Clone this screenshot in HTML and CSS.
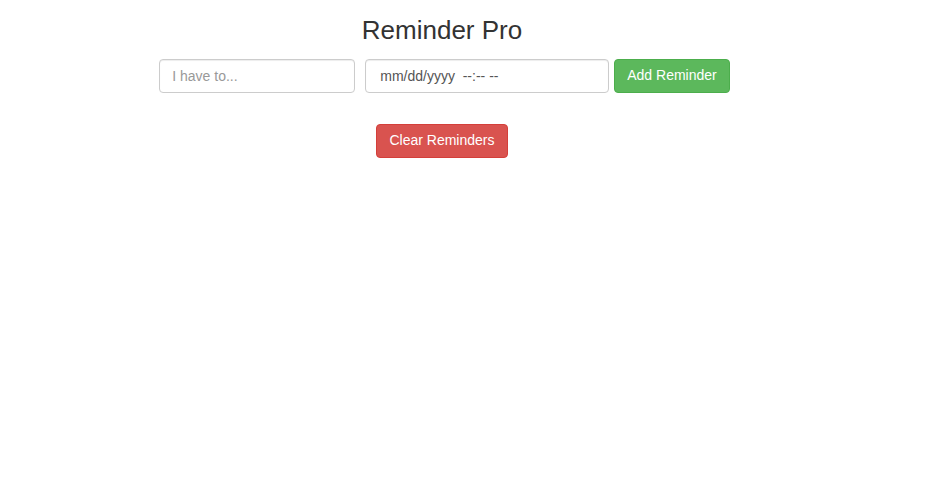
FILE: index.html
```html
<!DOCTYPE html>
<html>
<head>
<meta charset="utf-8">
<title>Reminder Pro</title>
<link rel="stylesheet" href="styles.css">
</head>
<body>
<div class="app">
  <h3 class="title">Reminder Pro</h3>
  <div class="form-row">
    <input class="form-control task" type="text" placeholder="I have to...">
    <input class="form-control date" type="text" placeholder="mm/dd/yyyy  --:-- --">
    <button class="btn btn-success add">Add Reminder</button>
  </div>
  <button class="btn btn-danger clear">Clear Reminders</button>
</div>
</body>
</html>
```
FILE: styles.css
```css
html, body {
  margin: 0;
  padding: 0;
  background: #fff;
}
body {
  font-family: "Liberation Sans", Arial, sans-serif;
  font-size: 14px;
  line-height: 1.42857;
  color: #333;
}
.app {
  width: 884px;
  display: flex;
  flex-direction: column;
  align-items: center;
  padding-top: 16px;
}
.title {
  margin: 0;
  font-size: 26px;
  font-weight: 400;
  line-height: 1.1;
  color: #333;
}
.form-row {
  display: flex;
  align-items: center;
  margin-top: 14px;
  padding-left: 5px;
}
.form-control {
  box-sizing: border-box;
  height: 34px;
  padding: 6px 12px;
  font-family: inherit;
  font-size: 14px;
  line-height: 1.42857;
  color: #555;
  background: #fff;
  border: 1px solid #ccc;
  border-radius: 4px;
  box-shadow: inset 0 1px 1px rgba(0,0,0,.075);
  outline: none;
}
.form-control::placeholder {
  color: #999;
}
.task {
  width: 196px;
}
.date {
  width: 244px;
  margin-left: 10px;
  padding-left: 14px;
  white-space: pre;
}
.date::placeholder {
  color: #555;
}
.btn {
  box-sizing: border-box;
  height: 34px;
  padding: 6px 12px;
  font-family: inherit;
  font-size: 14px;
  line-height: 1.42857;
  color: #fff;
  border: 1px solid transparent;
  border-radius: 4px;
  cursor: pointer;
}
.btn-success {
  background: #5cb85c;
  border-color: #4cae4c;
}
.btn-danger {
  background: #d9534f;
  border-color: #d43f3a;
}
.add {
  margin-left: 5px;
}
.clear {
  margin-top: 31px;
}
```
